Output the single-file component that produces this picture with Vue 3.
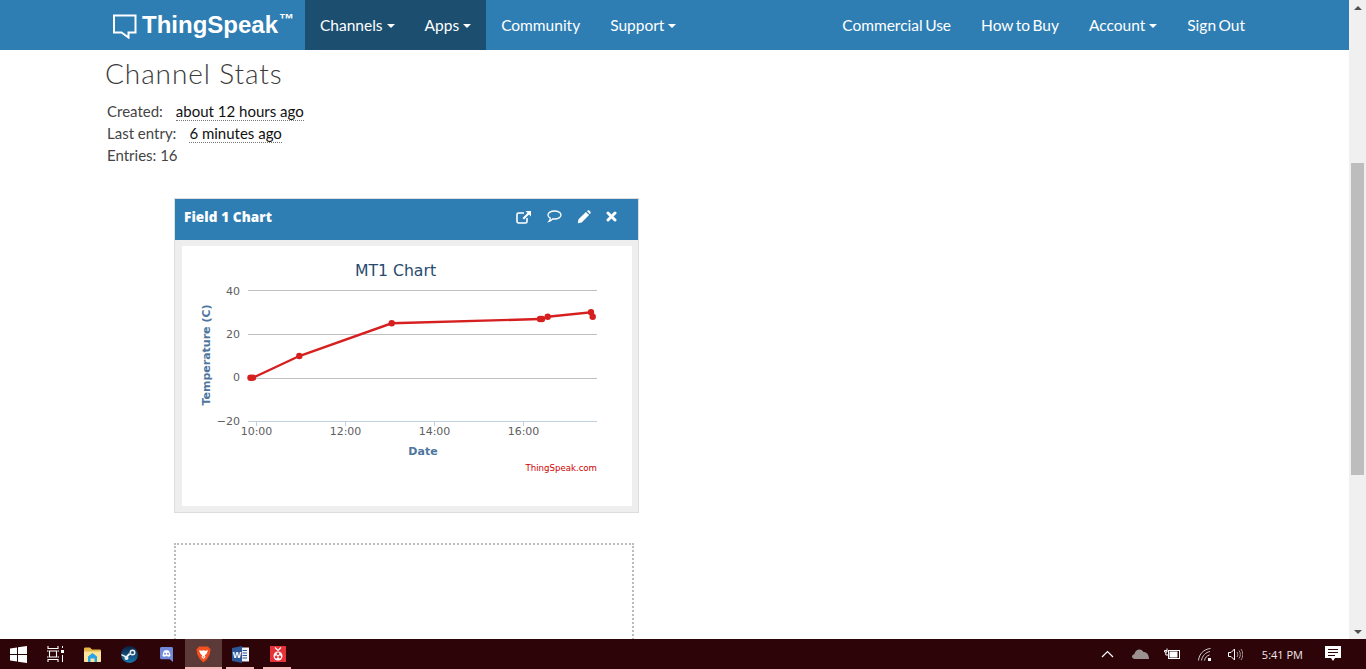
<script setup>
const navLeft = [
  { label: 'Channels', caret: true, active: true },
  { label: 'Apps', caret: true, active: true },
  { label: 'Community' },
  { label: 'Support', caret: true },
]
const navRight = [
  { label: 'Commercial Use' },
  { label: 'How to Buy' },
  { label: 'Account', caret: true },
  { label: 'Sign Out' },
]

// chart space is the white plot box, page offset 182,246
const points = [
  [68.5, 131.7], [71, 131.7], [117.3, 110], [209.7, 77.3], [358, 73], [360, 73],
  [365.7, 70.7], [409, 66.3], [410.7, 70.7],
]
const linePoints = points.map((p) => p.join(',')).join(' ')
const gridY = [44.5, 88.5, 132.5]
const yLabels = [
  { text: '40', y: 49 },
  { text: '20', y: 92 },
  { text: '0', y: 135 },
  { text: '−20', y: 179 },
]
const xTicks = [
  { x: 74.5, text: '10:00' },
  { x: 163.5, text: '12:00' },
  { x: 252.5, text: '14:00' },
  { x: 341.5, text: '16:00' },
]
</script>

<template>
  <div class="screen">
    <div class="window">
      <div class="page">
        <nav class="navbar">
          <a class="brand">
            <svg class="brand-icon" width="26" height="26" viewBox="0 0 26 26">
              <path d="M2 2.500H23.500V19.500H16.500V24.500L9.500 19.500H2Z" fill="none" stroke="#fff" stroke-width="2" />
            </svg>
            <span class="brand-name">ThingSpeak</span><span class="brand-tm">™</span>
          </a>
          <ul class="nav-list">
            <li v-for="item in navLeft" :key="item.label" class="nav-item" :class="{ active: item.active }">
              {{ item.label }}<span v-if="item.caret" class="caret"></span>
            </li>
          </ul>
          <ul class="nav-list nav-right">
            <li v-for="item in navRight" :key="item.label" class="nav-item">
              {{ item.label }}<span v-if="item.caret" class="caret"></span>
            </li>
          </ul>
        </nav>

        <main class="content">
          <h2 class="stats-title">Channel Stats</h2>
          <div class="stats">
            <div>Created:<abbr class="ago">about 12 hours ago</abbr></div>
            <div>Last entry:<abbr class="ago">6 minutes ago</abbr></div>
            <div>Entries: 16</div>
          </div>

          <section class="card">
            <header class="card-head">
              <span class="card-title">Field 1 Chart</span>
              <div class="card-tools">
                <svg width="16" height="14" viewBox="0 0 16 14">
                  <path d="M11 8V11.500C11 12.300 10.400 13 9.500 13H2.500C1.600 13 1 12.300 1 11.500V4.500C1 3.600 1.600 3 2.500 3H8" fill="none" stroke="#fff" stroke-width="1.600" />
                  <path d="M9.500 1H15V6.500L13 4.500L8 9.500L6.500 8L11.500 3Z" fill="#fff" />
                </svg>
                <svg width="15" height="13" viewBox="0 0 15 13">
                  <path d="M7.500 1C11.100 1 14 2.800 14 5C14 7.200 11.100 9 7.500 9C6.800 9 6.200 9 5.600 8.800C4.800 9.800 3.500 10.800 2 11.300C2.800 10.300 3.300 9.200 3.300 8.200C1.900 7.500 1 6.300 1 5C1 2.800 3.900 1 7.500 1Z" fill="none" stroke="#fff" stroke-width="1.300" />
                </svg>
                <svg width="14" height="14" viewBox="0 0 14 14">
                  <path d="M0.800 13.200L1.500 9.300L8.900 1.900L12.100 5.100L4.700 12.500ZM9.800 1L11 0.400C11.500 0.200 12 0.300 12.300 0.600L13.400 1.700C13.700 2 13.800 2.500 13.600 3L13 4.200Z" fill="#fff" />
                </svg>
                <svg width="11" height="11" viewBox="0 0 11 11">
                  <path d="M2 2L9 9M9 2L2 9" fill="none" stroke="#fff" stroke-width="3" stroke-linecap="round" />
                </svg>
              </div>
            </header>
            <div class="card-body">
              <svg class="chart" width="450" height="260" viewBox="0 0 450 260">
                <text x="213.500" y="30" text-anchor="middle" class="chart-title">MT1 Chart</text>
                <line v-for="y in gridY" :key="y" x1="66" x2="415" :y1="y" :y2="y" stroke="#c0c0c0" />
                <line x1="66" x2="415" y1="175.500" y2="175.500" stroke="#c0d0e0" />
                <line
                  v-for="t in xTicks"
                  :key="t.x"
                  :x1="t.x"
                  :x2="t.x"
                  y1="175"
                  y2="180"
                  stroke="#c0d0e0"
                />
                <text v-for="l in yLabels" :key="l.text" x="58" :y="l.y" text-anchor="end" class="axis-label">{{ l.text }}</text>
                <text v-for="t in xTicks" :key="t.text" :x="t.x" y="189" text-anchor="middle" class="axis-label">{{ t.text }}</text>
                <text x="241" y="209" text-anchor="middle" class="axis-title">Date</text>
                <text transform="translate(28 109) rotate(-90)" text-anchor="middle" class="axis-title">Temperature (C)</text>
                <polyline :points="linePoints" fill="none" stroke="#d62020" stroke-width="2.400" />
                <circle v-for="(p, i) in points" :key="i" :cx="p[0]" :cy="p[1]" r="3.200" fill="#d62020" />
                <text x="415" y="225" text-anchor="end" class="credit">ThingSpeak.com</text>
              </svg>
            </div>
          </section>

          <div class="placeholder"></div>
        </main>
      </div>

      <div class="scrollbar">
        <span class="arrow arrow-up"></span>
        <span class="thumb"></span>
        <span class="arrow arrow-down"></span>
      </div>
    </div>

    <footer class="taskbar">
      <div class="task-btn">
        <svg width="17" height="17" viewBox="0 0 17 17">
          <path d="M0 2.500L7 1.500V8H0ZM8 1.300L17 0V8H8ZM0 9H7V15.500L0 14.500ZM8 9H17V17L8 15.700Z" fill="#fff" />
        </svg>
      </div>
      <div class="task-btn">
        <svg width="17" height="16" viewBox="0 0 17 16">
          <path d="M1 0V2.500H11V0M2.500 5H9.500V11H2.500ZM1 16V13.500H11V16M0 5H1.500M0 11H1.500M10.500 5H12M10.500 11H12" fill="none" stroke="#fff" stroke-width="1.100" />
          <rect x="14" y="4" width="3" height="3" fill="#fff" />
          <path d="M15.500 0V2M15.500 9V16" stroke="#fff" stroke-width="1" />
        </svg>
      </div>
      <div class="task-btn">
        <svg width="17" height="15" viewBox="0 0 17 15">
          <path d="M0 2C0 1 .5 .5 1.500 .5H6L8 2.500H15.500C16.500 2.500 17 3 17 4V13.500C17 14.500 16.500 15 15.500 15H1.500C.5 15 0 14.500 0 13.500Z" fill="#e8b84a" />
          <path d="M0 4.500H17V13.500C17 14.500 16.500 15 15.500 15H1.500C.5 15 0 14.500 0 13.500Z" fill="#fde69c" />
          <path d="M8.500 6L13 9.500V15H10.500V11.500H6.500V15H4V9.500Z" fill="#2ba3e6" />
        </svg>
      </div>
      <div class="task-btn">
        <svg width="17" height="17" viewBox="0 0 17 17">
          <defs>
            <linearGradient id="steamFill" x1="0" y1="0" x2="0" y2="1">
              <stop offset="0" stop-color="#0c1f3f" />
              <stop offset="1" stop-color="#1877b0" />
            </linearGradient>
          </defs>
          <circle cx="8.500" cy="8.500" r="8.500" fill="url(#steamFill)" />
          <circle cx="11.500" cy="6.500" r="3" fill="#eef2f6" />
          <circle cx="11.500" cy="6.500" r="1.600" fill="#26507c" />
          <path d="M0.500 9.500L5.500 12L9.500 8.500L8 7L5 10L0.500 8Z" fill="#eef2f6" />
          <circle cx="5.500" cy="12" r="2" fill="#eef2f6" />
        </svg>
      </div>
      <div class="task-btn">
        <svg width="13" height="15" viewBox="0 0 13 15">
          <path d="M1.500 0H11.500C12.300 0 13 .7 13 1.500V15L9.800 12.300H1.500C.7 12.300 0 11.600 0 10.800V1.500C0 .7 .7 0 1.500 0Z" fill="#7289da" />
          <path d="M2.500 9C2.800 5.800 3.800 3.800 4.600 3.500C6 3 7 3 8.400 3.500C9.200 3.800 10.200 5.800 10.500 9C9 10 8 9.800 7.500 9.200H5.500C5 9.800 4 10 2.500 9Z" fill="#fff" />
          <circle cx="5" cy="6.800" r="1" fill="#7289da" />
          <circle cx="8" cy="6.800" r="1" fill="#7289da" />
        </svg>
      </div>
      <div class="task-btn task-active">
        <svg width="15" height="17" viewBox="0 0 18 20">
          <path d="M3.500 0.500H14.500L16 2.500L17.500 3.500L16.500 10L13 16L9 19.500L5 16L1.500 10L0.500 3.500L2 2.500Z" fill="#f3501f" />
          <path d="M3.500 5L7 5.500L9 5L11 5.500L14.500 5L12.500 9.500L10.500 11L11.500 13L9 15.500L6.500 13L7.500 11L5.500 9.500Z" fill="#fff" />
          <path d="M7.500 12.500H10.500L9 14Z" fill="#f3501f" />
        </svg>
      </div>
      <div class="task-btn task-open">
        <svg width="17" height="17" viewBox="0 0 17 17">
          <rect x="5" y="1.500" width="12" height="14" fill="#f2f5fa" />
          <path d="M10.500 4.500H15M10.500 7H15M10.500 9.500H15M10.500 12H15" stroke="#2b5797" />
          <path d="M0 2L10 0V17L0 15Z" fill="#2b5797" />
          <text x="5" y="11.500" text-anchor="middle" class="word-w">W</text>
        </svg>
      </div>
      <div class="task-btn task-open">
        <svg width="16" height="16" viewBox="0 0 16 16">
          <rect width="16" height="16" fill="#e6333a" />
          <circle cx="8" cy="10" r="4.500" fill="#fff" />
          <circle cx="6.200" cy="11" r="1.400" fill="#e6333a" />
          <circle cx="9.800" cy="11" r="1.400" fill="#e6333a" />
          <circle cx="8" cy="7.800" r="1.300" fill="#e6333a" />
          <path d="M5 1.500L8 4.500L11 1.500" fill="none" stroke="#fff" stroke-width="1.200" />
        </svg>
      </div>

      <div class="tray">
        <svg class="tray-chevron" width="13" height="8" viewBox="0 0 13 8">
          <path d="M1 7L6.500 1.500L12 7" fill="none" stroke="#fff" stroke-width="1.200" />
        </svg>
        <svg class="tray-cloud" width="17" height="10" viewBox="0 0 17 10">
          <path d="M3 10C1.300 10 0 9 0 7.500C0 6.200 1 5.300 2.300 5.200C3 2.500 5 0.500 7.500 0.500C9.300 0.500 10.700 1.500 11.500 3C14.500 3 17 5.500 17 10Z" fill="#9b9191" />
        </svg>
        <svg class="tray-battery" width="17" height="12" viewBox="0 0 17 12">
          <path d="M0.500 2.500H3V0.500M3 2.500V4H0.500V2.500M1.800 4V7H4" fill="none" stroke="#fff" />
          <rect x="4.500" y="2.500" width="11" height="8" fill="none" stroke="#fff" />
          <rect x="5.500" y="3.500" width="8" height="6" fill="#fff" />
        </svg>
        <svg class="tray-wifi" width="14" height="13" viewBox="0 0 14 13">
          <path d="M0.500 12.500C1 6 6 1 12.500 0.500M3.500 12.500C4 8 8 4 12 3.500M6.500 12.500C6.800 10 9 7.500 11.500 7" fill="none" stroke="#cfc8c8" stroke-width="1" />
          <rect x="10" y="10" width="3" height="3" fill="#fff" />
        </svg>
        <svg class="tray-volume" width="15" height="13" viewBox="0 0 15 13">
          <path d="M0.500 4.500H3L6.500 1V12L3 8.500H0.500Z" fill="none" stroke="#fff" />
          <path d="M9 4C10 5.500 10 7.500 9 9M11 2.500C12.800 5 12.800 8 11 10.500M13 1C15.300 4.500 15.300 8.500 13 12" fill="none" stroke="#a89e9e" />
        </svg>
        <span class="clock">5:41 PM</span>
        <svg class="tray-notes" width="16" height="16" viewBox="0 0 16 16">
          <path d="M0 0H16V12H10L8 15L6 12H0Z" fill="#fff" />
          <path d="M3 3.500H13M3 6.500H13M3 9.500H10" stroke="#2c0508" />
        </svg>
      </div>
    </footer>
  </div>
</template>

<style scoped>
.screen {
  display: flex;
  flex-direction: column;
  height: 669px;
  overflow: hidden;
  font-family: Lato, "Liberation Sans", sans-serif;
  color: #444;
}

.window {
  display: flex;
  flex: 1;
  min-height: 0;
}

.page {
  flex: 1;
  min-width: 0;
  overflow: hidden;
  background: #fff;
}

/* top nav */
.navbar {
  display: flex;
  align-items: stretch;
  height: 50px;
  padding: 0 89px 0 113px;
  background: #2e7eb3;
  color: #fff;
  font-size: 15.500px;
  word-spacing: -1px;
}

.brand {
  display: flex;
  align-items: center;
  width: 192px;
}

.brand-icon {
  flex: none;
  margin-left: -1px;
  margin-top: 2px;
}

.brand-name {
  margin-left: 4px;
  font-family: "Liberation Sans", sans-serif;
  font-size: 24px;
  font-weight: 700;
}

.brand-tm {
  align-self: flex-start;
  margin-top: 10px;
  margin-left: 1px;
  font-family: "Liberation Sans", sans-serif;
  font-size: 15px;
  font-weight: 700;
}

.nav-list {
  display: flex;
  margin: 0;
  padding: 0;
  list-style: none;
}

.nav-right {
  margin-left: auto;
  word-spacing: -1.500px;
}

.nav-item {
  display: flex;
  align-items: center;
  padding: 0 15px;
}

.nav-item.active {
  background: #1c4e70;
}

.caret {
  width: 0;
  height: 0;
  margin-left: 4px;
  margin-top: 2px;
  border-top: 4px solid #fff;
  border-left: 4px solid transparent;
  border-right: 4px solid transparent;
}

/* content */
.content {
  padding: 0 0 0 105px;
}

.stats-title {
  margin: 7px 0 0;
  font-size: 28px;
  line-height: 33px;
  font-weight: 300;
  letter-spacing: 0.900px;
  color: #3a3a3a;
}

.stats {
  margin: 10px 0 0 2px;
  font-size: 15px;
  line-height: 22px;
}

.ago {
  margin-left: 13px;
  color: #111;
  border-bottom: 1px dotted #777;
}

.card {
  width: 463px;
  margin: 32px 0 0 69px;
  border: 1px solid #ddd;
  background: #eee;
}

.card-head {
  display: flex;
  align-items: center;
  justify-content: space-between;
  height: 35px;
  padding: 0 21px 6px 9px;
  background: #2e7eb3;
  color: #fff;
}

.card-title {
  font-family: "Open Sans", sans-serif;
  font-size: 13.500px;
  font-weight: 800;
  letter-spacing: 0.100px;
}

.card-tools {
  display: flex;
  align-items: center;
  gap: 15px;
}

.card-body {
  padding: 6px 6px 6px 7px;
}

.chart {
  display: block;
  background: #fff;
}

.chart-title {
  font-family: "DejaVu Sans", sans-serif;
  font-size: 15.700px;
  fill: #274b6d;
}

.axis-label {
  font-family: "DejaVu Sans", sans-serif;
  font-size: 11px;
  fill: #606060;
}

.axis-title {
  font-family: "DejaVu Sans", sans-serif;
  font-size: 11px;
  font-weight: 700;
  fill: #4d759e;
}

.credit {
  font-family: "DejaVu Sans", sans-serif;
  font-size: 8.600px;
  fill: #d00000;
}

.word-w {
  font-family: "Liberation Sans", sans-serif;
  font-size: 9px;
  font-weight: 700;
  fill: #fff;
}

.placeholder {
  width: 456px;
  height: 200px;
  margin: 30px 0 0 69px;
  border: 2px dotted #bbb;
}

/* scrollbar */
.scrollbar {
  display: flex;
  flex: none;
  flex-direction: column;
  align-items: center;
  width: 17px;
  background: #f0f0f0;
}

.arrow {
  flex: none;
  width: 0;
  height: 0;
  border-left: 4px solid transparent;
  border-right: 4px solid transparent;
}

.arrow-up {
  margin-top: 6px;
  border-bottom: 4px solid #505050;
}

.arrow-down {
  margin-top: auto;
  margin-bottom: 5px;
  border-top: 4px solid #505050;
}

.thumb {
  flex: none;
  width: 13px;
  height: 312px;
  margin-top: 153px;
  background: #bdbdbd;
}

/* windows taskbar */
.taskbar {
  display: flex;
  flex: none;
  align-items: stretch;
  height: 30px;
  background: #2d0408;
  color: #fff;
}

.task-btn {
  display: flex;
  flex: none;
  align-items: center;
  justify-content: center;
  width: 37px;
  position: relative;
}

.task-active {
  background: #5c3a38;
}

.task-open::after,
.task-active::after {
  content: "";
  position: absolute;
  left: 4px;
  right: 5px;
  bottom: 0;
  height: 2px;
  background: #f6b9b9;
}

.task-active::after {
  left: 0;
  right: 0;
}

.tray {
  display: flex;
  align-items: center;
  margin-left: auto;
}

.tray svg {
  flex: none;
}

.tray-chevron {
  margin-right: 18px;
}

.tray-cloud {
  margin-right: 15px;
}

.tray-battery {
  margin-right: 17px;
}

.tray-wifi {
  margin-right: 16px;
}

.tray-volume {
  margin-right: 19px;
}

.clock {
  margin-right: 22px;
  font-family: "Open Sans", sans-serif;
  font-size: 11px;
  color: #f0e8e8;
}

.tray-notes {
  margin-right: 25px;
}
</style>
